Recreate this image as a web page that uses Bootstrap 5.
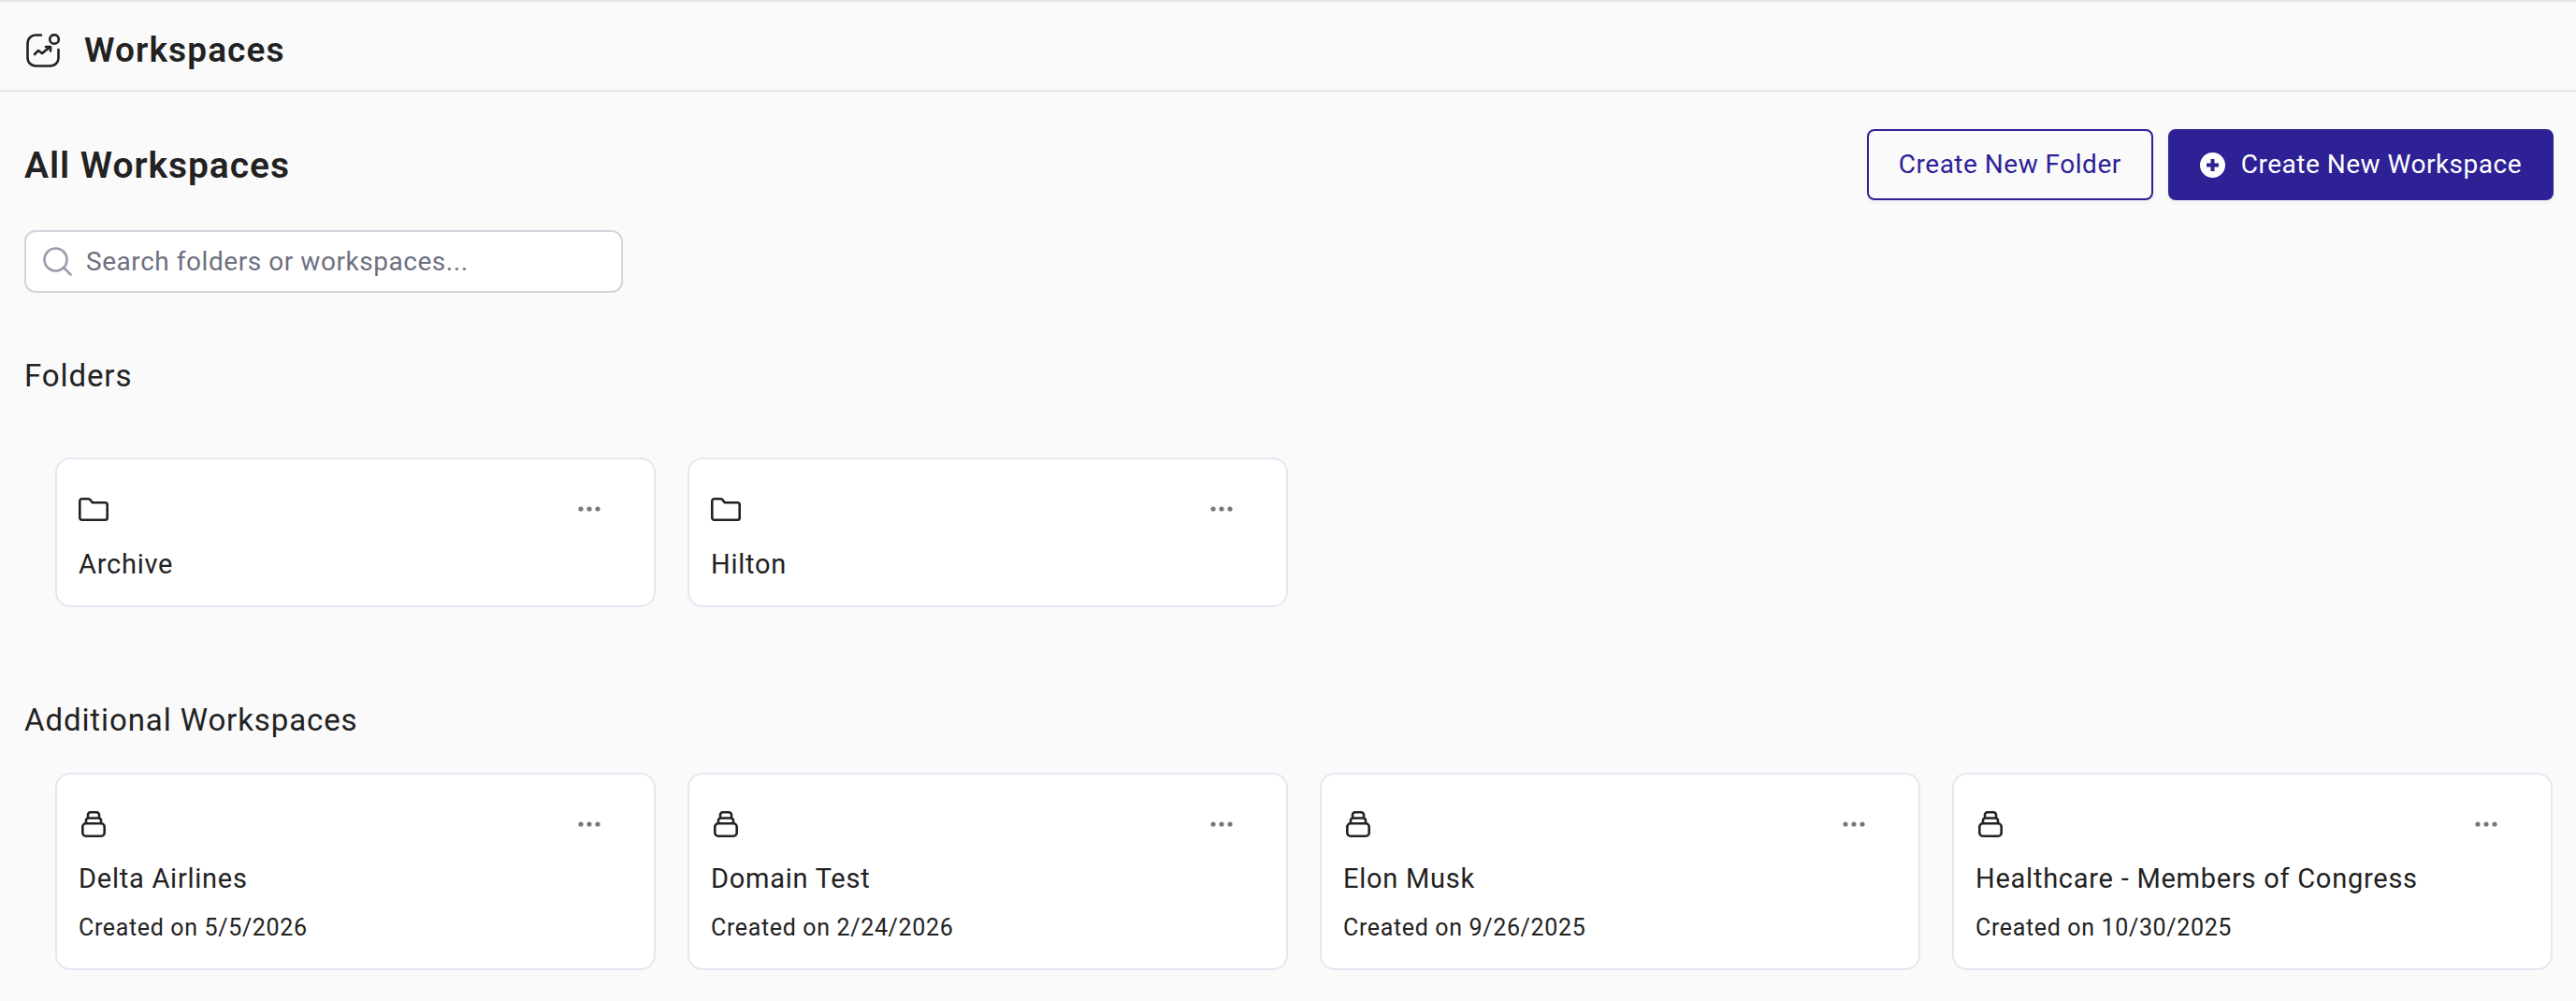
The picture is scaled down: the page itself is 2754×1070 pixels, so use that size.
<!DOCTYPE html>
<html lang="en">
<head>
  <meta charset="UTF-8">
  <title>Workspaces</title>
  <link href="https://cdn.jsdelivr.net/npm/bootstrap@5.3.2/dist/css/bootstrap.min.css" rel="stylesheet">
  <style>
    body {
      background: #fafafb;
      font-family: Roboto, "Liberation Sans", sans-serif;
      color: #222;
      min-height: 100vh;
    }

    .top-bar {
      height: 98px;
      padding: 10px 0 0 28px;
      gap: 26px;
      border-top: 2px solid #e4e4e6;
      border-bottom: 2px solid #e6e6e8;
    }

    .top-title {
      font-size: 37px;
      font-weight: 600;
      letter-spacing: 1.1px;
      margin: 0;
    }

    .page-body {
      padding: 40px 24px 0 26px;
    }

    .page-title {
      font-size: 39px;
      font-weight: 600;
      letter-spacing: 0.95px;
      margin: 2px 0 0;
    }

    .act-btn {
      height: 76px;
      font-size: 28px;
      letter-spacing: 0.5px;
      border-radius: 8px;
      border: 2px solid #2e2196;
      padding: 0 32px;
      color: #2e2196;
      background: transparent;
      box-shadow: 0 2px 4px rgba(0,0,0,0.06);
    }

    .act-btn:hover { color: #2e2196; border-color: #2e2196; }

    .act-fill {
      color: #fff;
      background: #2e2196;
      gap: 17px;
    }

    .search-box {
      width: 640px;
      height: 67px;
      margin-top: 32px;
      padding-left: 18px;
      gap: 13px;
      background: #fff;
      border: 2px solid #d3d4dc;
      border-radius: 12px;
    }

    .search-box input {
      border: 0;
      outline: 0;
      flex: 1;
      font-size: 28px;
      letter-spacing: 0.55px;
      background: transparent;
      color: #222;
    }

    .search-box input::placeholder { color: #6c7080; }

    .sec-title {
      font-size: 33px;
      line-height: 44px;
      font-weight: 400;
      letter-spacing: 0.9px;
      margin: 67px 0 65px;
    }

    .sec-title.second { margin: 99px 0 34px; }

    .tile-grid {
      display: grid;
      grid-template-columns: repeat(4, 642px);
      gap: 34px;
      padding-left: 33px;
    }

    .tile {
      border: 2px solid #e5e7f1;
      border-radius: 16px;
      padding: 39px 24px 0 23px;
      background: #fff;
    }

    .folder-tile { height: 160px; }
    .work-tile { height: 211px; }

    .tile-head {
      height: 28px;
      padding-right: 33px;
    }

    .work-mark { margin-left: 3px; }

    .tile-name {
      font-size: 29px;
      line-height: 40px;
      letter-spacing: 0.75px;
      margin-top: 25px;
    }

    .work-tile .tile-name { margin-top: 24px; }

    .tile-date {
      font-size: 25px;
      line-height: 34px;
      letter-spacing: 0.65px;
      margin-top: 16px;
    }
  </style>
</head>

<body>
  <div class="top-bar d-flex align-items-center">
    <svg width="36" height="36" viewBox="0 0 36 36" fill="none" stroke="#222" stroke-width="2.6" stroke-linecap="round" stroke-linejoin="round">
      <path d="M16 1.5H10a8.5 8.5 0 0 0-8.500 8.500v16a8.500 8.500 0 0 0 8.500 8.500h16a8.500 8.500 0 0 0 8.500-8.500V17"/>
      <circle cx="30" cy="6" r="4.800"/>
      <path d="M9 22l4-4 4 3 8-6.500M21 14h5v4.500"/>
    </svg>
    <h1 class="top-title">Workspaces</h1>
  </div>

  <div class="page-body">
    <div class="d-flex justify-content-between align-items-center">
      <h2 class="page-title">All Workspaces</h2>
      <div class="d-flex gap-3">
        <button class="btn act-btn">Create New Folder</button>
        <button class="btn act-btn act-fill d-flex align-items-center">
          <svg width="27" height="27" viewBox="0 0 27 27">
            <circle cx="13.500" cy="13.500" r="13.500" fill="#fff"/>
            <path d="M13.500 7v13M7 13.500h13" stroke="#2e2196" stroke-width="4"/>
          </svg>
          Create New Workspace
        </button>
      </div>
    </div>

    <div class="search-box d-flex align-items-center">
      <svg width="31" height="31" viewBox="0 0 31 31" fill="none" stroke="#9a9dab" stroke-width="2.600" stroke-linecap="round">
        <circle cx="13.500" cy="13.500" r="12"/>
        <path d="M22.500 22.500l7 7"/>
      </svg>
      <input type="text" placeholder="Search folders or workspaces...">
    </div>

    <h3 class="sec-title">Folders</h3>
    <div class="tile-grid" id="folderGrid"></div>

    <h3 class="sec-title second">Additional Workspaces</h3>
    <div class="tile-grid" id="workGrid"></div>
  </div>

  <script>
    const dots = `<svg width="24" height="6" viewBox="0 0 24 6" fill="#7d7679"><circle cx="3" cy="3" r="2.600"/><circle cx="12" cy="3" r="2.600"/><circle cx="21" cy="3" r="2.600"/></svg>`;

    const folderIcon = `<svg width="32" height="25" viewBox="0 0 32 25" fill="none" stroke="#222" stroke-width="2.600" stroke-linejoin="round"><path d="M1.300 3.500a2.200 2.200 0 0 1 2.200-2.200h7a2.500 2.500 0 0 1 2 1l2.300 3h13.700a2.200 2.200 0 0 1 2.200 2.200v14a2.200 2.200 0 0 1-2.200 2.200H3.500a2.200 2.200 0 0 1-2.200-2.200z"/></svg>`;

    const workIcon = `<svg class="work-mark" width="26" height="28" viewBox="0 0 26 28" fill="none" stroke="#222" stroke-width="2.600" stroke-linejoin="round"><rect x="1.300" y="13.300" width="23.400" height="13.400" rx="3.500"/><path d="M5 13V10a2.500 2.500 0 0 1 2.500-2.500h11A2.500 2.500 0 0 1 21 10v3M7 7.500V4a2.700 2.700 0 0 1 2.700-2.700h6.600A2.700 2.700 0 0 1 19 4v3.500"/></svg>`;

    const folders = ["Archive", "Hilton"];
    const workspaces = [
      ["Delta Airlines", "5/5/2026"],
      ["Domain Test", "2/24/2026"],
      ["Elon Musk", "9/26/2025"],
      ["Healthcare - Members of Congress", "10/30/2025"]
    ];

    function tileHead(icon) {
      return `<div class="tile-head d-flex justify-content-between align-items-center">${icon}${dots}</div>`;
    }

    document.getElementById("folderGrid").innerHTML = folders.map(name => `
      <div class="tile folder-tile">
        ${tileHead(folderIcon)}
        <div class="tile-name">${name}</div>
      </div>`).join("");

    document.getElementById("workGrid").innerHTML = workspaces.map(w => `
      <div class="tile work-tile">
        ${tileHead(workIcon)}
        <div class="tile-name">${w[0]}</div>
        <div class="tile-date">Created on ${w[1]}</div>
      </div>`).join("");
  </script>
  <script src="https://cdn.jsdelivr.net/npm/bootstrap@5.3.2/dist/js/bootstrap.bundle.min.js"></script>
</body>
</html>
